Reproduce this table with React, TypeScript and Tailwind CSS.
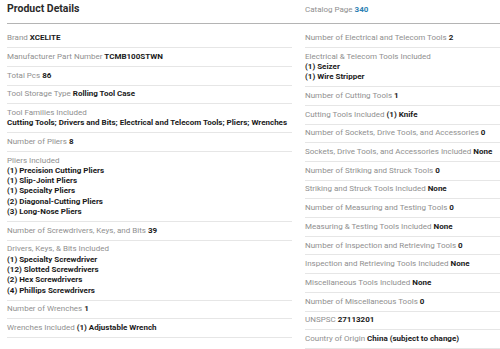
import React from 'react';

type Row = { label: string; value?: string; items?: string[] };

const left: Row[] = [
    { label: 'Brand', value: 'XCELITE' },
    { label: 'Manufacturer Part Number', value: 'TCMB100STWN' },
    { label: 'Total Pcs', value: '86' },
    { label: 'Tool Storage Type', value: 'Rolling Tool Case' },
    {
        label: 'Tool Families Included',
        items: ['Cutting Tools; Drivers and Bits; Electrical and Telecom Tools; Pliers; Wrenches'],
    },
    { label: 'Number of Pliers', value: '8' },
    {
        label: 'Pliers Included',
        items: [
            '(1) Precision Cutting Pliers',
            '(1) Slip-Joint Pliers',
            '(1) Specialty Pliers',
            '(2) Diagonal-Cutting Pliers',
            '(3) Long-Nose Pliers',
        ],
    },
    { label: 'Number of Screwdrivers, Keys, and Bits', value: '39' },
    {
        label: 'Drivers, Keys, & Bits Included',
        items: [
            '(1) Specialty Screwdriver',
            '(12) Slotted Screwdrivers',
            '(2) Hex Screwdrivers',
            '(4) Phillips Screwdrivers',
        ],
    },
    { label: 'Number of Wrenches', value: '1' },
    { label: 'Wrenches Included', value: '(1) Adjustable Wrench' },
];

const right: Row[] = [
    { label: 'Number of Electrical and Telecom Tools', value: '2' },
    { label: 'Electrical & Telecom Tools Included', items: ['(1) Seizer', '(1) Wire Stripper'] },
    { label: 'Number of Cutting Tools', value: '1' },
    { label: 'Cutting Tools Included', value: '(1) Knife' },
    { label: 'Number of Sockets, Drive Tools, and Accessories', value: '0' },
    { label: 'Sockets, Drive Tools, and Accessories Included', value: 'None' },
    { label: 'Number of Striking and Struck Tools', value: '0' },
    { label: 'Striking and Struck Tools Included', value: 'None' },
    { label: 'Number of Measuring and Testing Tools', value: '0' },
    { label: 'Measuring & Testing Tools Included', value: 'None' },
    { label: 'Number of Inspection and Retrieving Tools', value: '0' },
    { label: 'Inspection and Retrieving Tools Included', value: 'None' },
    { label: 'Miscellaneous Tools Included', value: 'None' },
    { label: 'Number of Miscellaneous Tools', value: '0' },
    { label: 'UNSPSC', value: '27113201' },
    { label: 'Country of Origin', value: 'China (subject to change)' },
];

const SpecRow: React.FC<{ row: Row }> = ({ row }) => (
    <li className="border-b border-[#e6e6e6] py-[3.7px] leading-[10.3px]">
        <span className="text-[#8f8f8f]">{row.label}</span>
        {row.value && <span className="font-bold text-[#1a1a1a]"> {row.value}</span>}
        {row.items &&
            row.items.map((item) => (
                <div key={item} className="font-bold text-[#1a1a1a]">
                    {item}
                </div>
            ))}
    </li>
);

export default function App() {
    return (
        <div
            className="w-[500px] h-[349px] overflow-hidden bg-white pl-[7px] text-[8px]"
            style={{ fontFamily: 'Roboto, "Liberation Sans", sans-serif' }}
        >
            <div className="w-[590px]">
                <div className="flex items-start h-[24px] pt-[2px] border-b-[1.5px] border-[#b4b4b4]">
                    <h2 className="w-[298px] text-[10.5px] leading-[14px] font-bold text-[#2b2b2b]">
                        Product Details
                    </h2>
                    <div className="leading-[14px] pt-[1px]">
                        <span className="text-[#8f8f8f]">Catalog Page</span>
                        <span className="font-bold text-[#2d7fb3]"> 340</span>
                    </div>
                </div>
                <div className="flex gap-[13px] pt-[5.5px]">
                    <ul className="w-[285px]">
                        {left.map((r) => (
                            <SpecRow key={r.label} row={r} />
                        ))}
                    </ul>
                    <ul className="w-[285px]">
                        {right.map((r) => (
                            <SpecRow key={r.label} row={r} />
                        ))}
                    </ul>
                </div>
            </div>
        </div>
    );
}
